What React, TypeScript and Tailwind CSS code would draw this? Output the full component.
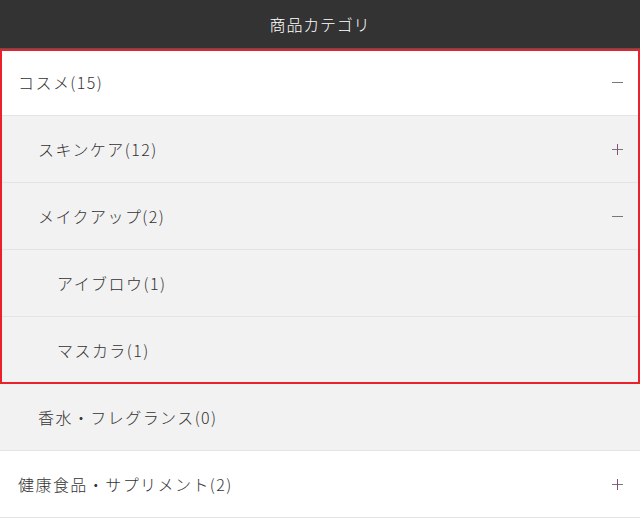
import React from 'react';

type Item = {
  label: string;
  level: number;
  toggle?: 'plus' | 'minus';
  bg: 'white' | 'gray';
};

const focused: Item[] = [
  { label: 'コスメ(15)', level: 0, toggle: 'minus', bg: 'white' },
  { label: 'スキンケア(12)', level: 1, toggle: 'plus', bg: 'gray' },
  { label: 'メイクアップ(2)', level: 1, toggle: 'minus', bg: 'gray' },
  { label: 'アイブロウ(1)', level: 2, bg: 'gray' },
  { label: 'マスカラ(1)', level: 2, bg: 'gray' },
];

const rest: Item[] = [
  { label: '香水・フレグランス(0)', level: 1, bg: 'gray' },
  { label: '健康食品・サプリメント(2)', level: 0, toggle: 'plus', bg: 'white' },
];

function Toggle({ kind }: { kind: 'plus' | 'minus' }) {
  return (
    <svg width="11" height="11" viewBox="0 0 11 11" className="text-[#777]">
      <path d="M0 5.5h11" stroke="currentColor" strokeWidth="1" />
      {kind === 'plus' && <path d="M5.5 0v11" stroke="#8a4d7e" strokeWidth="1" />}
    </svg>
  );
}

function Row({ item }: { item: Item }) {
  const pad = item.level === 0 ? 'pl-[18px]' : item.level === 1 ? 'pl-[38px]' : 'pl-[57px]';
  return (
    <div
      className={`flex h-[67px] items-center justify-between border-b border-[#e4e4e4] pr-[17px] ${pad} ${
        item.bg === 'white' ? 'bg-white' : 'bg-[#f2f2f2]'
      }`}
    >
      <span className="text-[16px] font-light tracking-[0.09em] text-[#333]">{item.label}</span>
      {item.toggle && <Toggle kind={item.toggle} />}
    </div>
  );
}

export default function App() {
  return (
    <div className="min-h-[527px] w-[640px] bg-white" style={{ fontFamily: '"Noto Sans CJK JP", "Noto Sans", sans-serif' }}>
      <div className="flex h-[49px] items-center justify-center border-b border-[#555] bg-[#333333] text-[16px] font-light tracking-[0.05em] text-white">
        商品カテゴリ
      </div>
      <div className="outline-2 -outline-offset-2 outline-[#e8212b]">
        {focused.map((item) => (
          <Row key={item.label} item={item} />
        ))}
      </div>
      {rest.map((item) => (
        <Row key={item.label} item={item} />
      ))}
    </div>
  );
}
